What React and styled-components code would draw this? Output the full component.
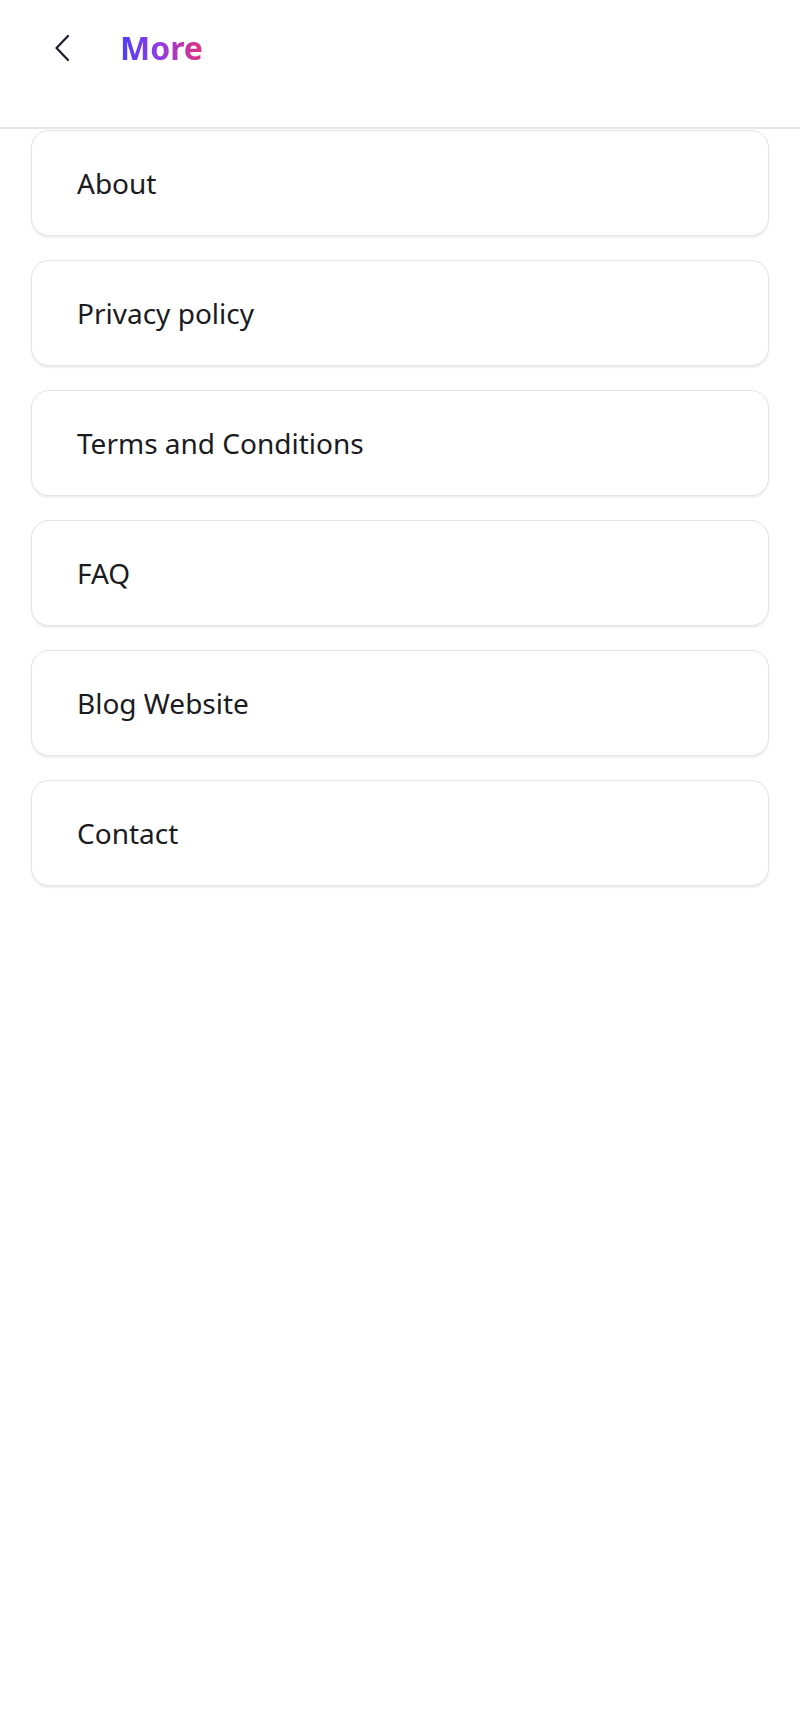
import * as React from 'react'
import styled, { createGlobalStyle } from 'styled-components'

const items = ['About', 'Privacy policy', 'Terms and Conditions', 'FAQ', 'Blog Website', 'Contact']

const GlobalStyle = createGlobalStyle`
    html, body {
        margin: 0;
        padding: 0;
        background: #ffffff;
    }
    body {
        font-family: "Noto Sans", "Open Sans", sans-serif;
        color: #1b1b22;
    }
`

const App = () => {
    return (
        <Page>
            <GlobalStyle />
            <Header>
                <BackButton aria-label="Back">
                    <svg width="16" height="28" viewBox="0 0 16 28" fill="none">
                        <path d="M14 2 L2.5 14 L14 26" stroke="#1b1b2a" strokeWidth="2.2" strokeLinecap="round" strokeLinejoin="round" />
                    </svg>
                </BackButton>
                <Title>More</Title>
            </Header>
            <List>
                {items.map(item => (
                    <Card key={item}>
                        <CardLabel>{item}</CardLabel>
                    </Card>
                ))}
            </List>
        </Page>
    )
}

const Page = styled.div`
    width: 800px;
    min-height: 1734px;
    background: #ffffff;
`

const Header = styled.header`
    height: 129px;
    display: flex;
    align-items: center;
    padding-left: 54px;
    padding-bottom: 31px;
    box-sizing: border-box;
    border-bottom: 2px solid #e6e6e8;
    gap: 49px;
`

const BackButton = styled.button`
    background: none;
    border: none;
    padding: 0;
    width: 17px;
    display: flex;
    align-items: center;
    cursor: pointer;
`

const Title = styled.h1`
    margin: 0;
    font-size: 32px;
    font-weight: 700;
    line-height: 1;
    background: linear-gradient(90deg, #4f3ef6 0%, #8d3ee6 45%, #e2307d 100%);
    -webkit-background-clip: text;
    background-clip: text;
    color: transparent;
`

const List = styled.div`
    display: flex;
    flex-direction: column;
    gap: 24px;
    padding: 1px 31px 0 31px;
`

const Card = styled.div`
    height: 106px;
    box-sizing: border-box;
    border: 1.5px solid #e4e4e6;
    border-radius: 18px;
    box-shadow: 0 1.5px 2px rgba(0, 0, 0, 0.07);
    display: flex;
    align-items: center;
    padding-left: 45px;
    background: #ffffff;
`

const CardLabel = styled.span`
    font-size: 28px;
    line-height: 1;
    color: #1b1b22;
`

export default App
